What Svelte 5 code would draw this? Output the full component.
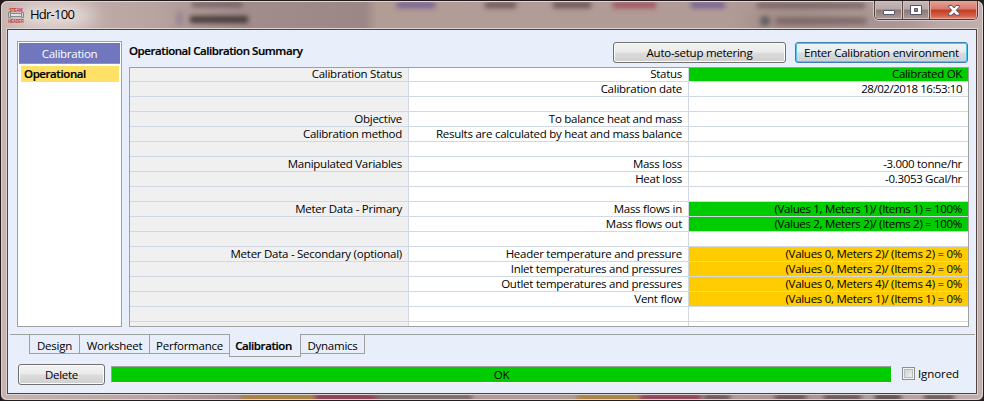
<script>
  const rows = [
    ['Calibration Status', 'Status', 'Calibrated OK', 'ok'],
    ['', 'Calibration date', '28/02/2018 16:53:10', 'date'],
    ['', '', '', ''],
    ['Objective', 'To balance heat and mass', '', ''],
    ['Calibration method', 'Results are calculated by heat and mass balance', '', ''],
    ['', '', '', ''],
    ['Manipulated Variables', 'Mass loss', '-3.000 tonne/hr', ''],
    ['', 'Heat loss', '-0.3053 Gcal/hr', ''],
    ['', '', '', ''],
    ['Meter Data - Primary', 'Mass flows in', '(Values 1, Meters 1)/ (Items 1) = 100%', 'ok'],
    ['', 'Mass flows out', '(Values 2, Meters 2)/ (Items 2) = 100%', 'ok'],
    ['', '', '', ''],
    ['Meter Data - Secondary (optional)', 'Header temperature and pressure', '(Values 0, Meters 2)/ (Items 2) = 0%', 'warn'],
    ['', 'Inlet temperatures and pressures', '(Values 0, Meters 2)/ (Items 2) = 0%', 'warn'],
    ['', 'Outlet temperatures and pressures', '(Values 0, Meters 4)/ (Items 4) = 0%', 'warn'],
    ['', 'Vent flow', '(Values 0, Meters 1)/ (Items 1) = 0%', 'warn'],
    ['', '', '', ''],
    ['', '', '', '']
  ];
  const tabs = [
    { name: 'Design', width: 51 },
    { name: 'Worksheet', width: 71 },
    { name: 'Performance', width: 81 },
    { name: 'Calibration', width: 72 },
    { name: 'Dynamics', width: 65 }
  ];
  let active = $state('Calibration');
  let ignored = $state(false);
</script>

<div class="desktop">
  <div class="window">
    <svg class="glass wide" width="984" height="401" viewBox="0 0 984 401" aria-hidden="true">
      <ellipse cx="55" cy="16" rx="42" ry="14" fill="#e8dfdd" opacity=".9" />
      <rect x="750" y="16" width="170" height="12" fill="#806c6b" opacity=".4" />
    </svg>
    <svg class="glass soft" width="984" height="401" viewBox="0 0 984 401" aria-hidden="true">
      <rect x="176" y="12" width="7" height="14" fill="#7a6a88" opacity=".4" />
      <rect x="192" y="2" width="50" height="5" fill="#4f403f" opacity=".6" />
      <rect x="190" y="16" width="58" height="7" fill="#352a2a" opacity=".85" />
      <rect x="397" y="2" width="38" height="6" fill="#685395" opacity=".8" />
      <rect x="485" y="2" width="31" height="6" fill="#574645" opacity=".8" />
      <rect x="553" y="2" width="38" height="6" fill="#554443" opacity=".8" />
      <rect x="613" y="2" width="43" height="6" fill="#9d4552" opacity=".85" />
      <rect x="691" y="2" width="34" height="6" fill="#685395" opacity=".8" />
      <rect x="757" y="3" width="108" height="5" fill="#5d4a49" opacity=".7" />
      <circle cx="765" cy="21" r="5" fill="#494b50" opacity=".75" />
      <rect x="776" y="18" width="90" height="6" fill="#5d4a49" opacity=".6" />
      <rect x="241" y="394" width="73" height="7" fill="#ad8134" />
      <rect x="315" y="394" width="61" height="7" fill="#8d364b" />
      <rect x="376" y="394" width="96" height="7" fill="#766364" />
      <rect x="577" y="394" width="62" height="7" fill="#ad8134" />
      <rect x="640" y="394" width="61" height="7" fill="#8d364b" />
      <rect x="704" y="394" width="26" height="7" fill="#655354" />
      <rect x="775" y="394" width="31" height="7" fill="#655354" />
      <rect x="824" y="394" width="37" height="7" fill="#655354" />
      <rect x="875" y="394" width="26" height="7" fill="#554748" />
      <rect x="924" y="394" width="30" height="7" fill="#655354" />
    </svg>
    <svg class="glass" width="984" height="401" viewBox="0 0 984 401" aria-hidden="true">
      <rect x="1.5" y="1.5" width="981" height="398" rx="6" fill="none" stroke="#e0d4d2" />
    </svg>
    <header>
      <svg class="logo" width="18" height="18" viewBox="-1 -1 18 18">
        <g fill="#cf3137" font-family="Liberation Sans, sans-serif" font-weight="bold" font-size="4.6">
          <text x="1.2" y="3.6" textLength="13.4" lengthAdjust="spacingAndGlyphs">STEAM</text>
          <text x=".3" y="14.6" textLength="15.2" lengthAdjust="spacingAndGlyphs">HEADER</text>
        </g>
        <path d="M2 5.5H14V8.5H2Z" fill="#dce0e0" stroke="#858c8f" />
        <path d="M.5 4.5H2.5V9.5H.5ZM13.5 4.5H15.5V9.5H13.5Z" fill="#d2d6d7" stroke="#80878a" />
      </svg>
      <h1>Hdr-100</h1>
      <div class="controls">
        <button class="min" aria-label="Minimize"><svg width="12" height="6"><rect x=".5" y=".5" width="11" height="4" rx=".5" fill="#fff" stroke="#53556b" /></svg></button>
        <button class="max" aria-label="Maximize"><svg width="12" height="10"><path d="M.5.5H11.5V9.5H.5ZM4.5 3.5V6.5H7.5V3.5Z" fill="#fff" fill-rule="evenodd" stroke="#53556b" /></svg></button>
        <button class="close" aria-label="Close"><svg width="12" height="11"><path d="M.7.5H4L6 3 8 .5H11.3V2L8.2 5.3 11.3 8.5V10.2H8L6 7.8 4 10.2H.7V8.5L3.8 5.3.7 2Z" fill="#fff" stroke="#53556b" stroke-linejoin="round" /></svg></button>
      </div>
    </header>

    <main>
      <div class="content">
        <aside>
          <div class="side-title">Calibration</div>
          <div class="side-item">Operational</div>
        </aside>
        <section>
          <div class="top">
            <h2>Operational Calibration Summary</h2>
            <button class="btn auto">Auto-setup metering</button>
            <button class="btn enter">Enter Calibration environment</button>
          </div>
          <div class="grid">
            {#each rows as [group, label, value, state]}
              <div class="row">
                <div class="cell group">{group}</div>
                <div class="cell label">{label}</div>
                <div class="cell value {state}">{value}</div>
              </div>
            {/each}
          </div>
        </section>
      </div>

      <nav>
        <span class="lead"></span>
        {#each tabs as tab}
          <button class="tab" class:active={active === tab.name} style="width: {tab.width}px" onclick={() => (active = tab.name)}>{tab.name}</button>
        {/each}
        <span class="rest"></span>
      </nav>

      <footer>
        <button class="btn delete">Delete</button>
        <div class="status">OK</div>
        <label><input type="checkbox" bind:checked={ignored} /><span>Ignored</span></label>
      </footer>
    </main>
  </div>
</div>

<style>
  :global(body) { background: #191516; }
  .desktop { width: 984px; height: 401px; overflow: hidden; background: #201a1b; }
  .desktop, .desktop * { box-sizing: border-box; }
  .desktop, button { font-family: "Open Sans", "Noto Sans", sans-serif; font-size: 11.5px; letter-spacing: -.26px; color: #000; }
  button { padding: 0; margin: 0; }
  .window {
    position: relative; width: 984px; height: 401px; border: 1px solid #241b1c;
    border-radius: 7px 7px 6px 6px; overflow: hidden; padding: 0 6px 6px;
    background: linear-gradient(90deg, #c7b4b1, #b8a4a1 150px, #a08d8c 240px, #9b8786 364px, #b29c96 376px, #b19b96 735px, #a79390 800px, #c1afad 100%);
  }
  .glass { position: absolute; left: -1px; top: -1px; }
  .soft { filter: blur(2.5px); }
  .wide { filter: blur(9px); }
  header { position: relative; height: 28px; display: flex; align-items: flex-start; }
  .logo { margin: 6px 0 0 0; flex: none; }
  h1 { font-size: 13px; font-weight: 400; margin: 5px 0 0 5px; line-height: 17px; letter-spacing: -.75px; flex: 1; text-shadow: 0 0 6px #eee5e3; }
  .controls {
    display: flex; width: 104px; height: 19px; margin-right: -1px;
    border: 1px solid #4b3c3d; border-top: 0; border-radius: 0 0 5px 5px; overflow: hidden;
    box-shadow: 0 0 0 1px #d8caca;
  }
  .controls button {
    display: flex; align-items: center; justify-content: center; border: 0; border-right: 1px solid #584a4b;
    background: linear-gradient(#c7bab9, #b7a8a7 45%, #8b7877 50%, #ab9b9a);
    box-shadow: inset 0 0 0 1px #cfc3c2;
  }
  .controls .min { width: 28px; padding-top: 5px; }
  .controls .max { width: 27px; padding-top: 0; }
  .controls .close {
    flex: 1; border-right: 0; background: linear-gradient(#e3a294, #d8796a 45%, #bf3c22 50%, #d5654c 85%, #e19c84);
    box-shadow: inset 0 0 0 1px #e6a697;
  }
  main {
    position: relative; height: 365px; border: 1px solid #4c4344; background: #e8effa;
    box-shadow: 0 0 0 1px #ded4d3; display: flex; flex-direction: column;
  }
  .content { display: flex; height: 304px; padding: 11px 7px 7px 9px; }
  aside { width: 105px; height: 286px; border: 1px solid #a0a0a0; background: #fff; padding: 1px; }
  .side-title { height: 21px; line-height: 22px; background: #7077bd; color: #fff; text-align: center; border-bottom: 1px solid #9296b4; }
  .side-item { margin: 2px 1px 0 2px; height: 16px; line-height: 15px; padding-left: 3px; background: #ffe168; font-weight: 600; letter-spacing: -.42px; -webkit-text-stroke: .2px #000; }
  section { width: 840px; margin-left: 7px; }
  .top { height: 26px; display: flex; align-items: flex-start; }
  h2 { font-size: 11.5px; font-weight: 600; margin: 2px 0 0; line-height: 16px; letter-spacing: -.44px; flex: 1; white-space: nowrap; -webkit-text-stroke: .2px #000; }
  .btn {
    height: 21px; border: 1px solid #707070; border-radius: 3px; line-height: 19px; text-align: center;
    background: linear-gradient(#f3f3f3, #ebebeb 48%, #dcdcdc 52%, #cfcfcf); box-shadow: inset 0 0 0 1px #fbfbfb;
  }
  .auto { width: 173px; margin: 1px 9px 0 0; }
  .enter { width: 173px; margin: 1px 1px 0 0; border-color: #3c7fb1; background: linear-gradient(#eff3f5, #e7edf0 48%, #d7dde1 52%, #c9d1d6); box-shadow: inset 0 0 0 1px #48c8f2; }
  .grid { height: 260px; border: 1px solid #a0a0a0; background: #fff; overflow: hidden; }
  .row { display: flex; height: 15px; border-bottom: 1px solid #d0d7e5; }
  .row:first-child { height: 14px; }
  .cell { line-height: 14px; height: 14px; text-align: right; white-space: pre; }
  .row:first-child .cell { height: 13px; line-height: 12px; }
  .group { width: 279px; background: #f0f0f0; border-right: 1px solid #d0d7e5; padding-right: 6px; }
  .label { width: 280px; border-right: 1px solid #d0d7e5; padding-right: 6px; }
  .value { width: 279px; padding-right: 6px; letter-spacing: -.32px; }
  .date { letter-spacing: -.46px; }
  .ok { background: #00cc00; }
  .warn { background: #ffcc00; letter-spacing: -.28px; }
  nav { display: flex; height: 23px; margin: 0 1px 0 2px; align-items: flex-start; }
  .lead { width: 19px; height: 1px; background: #a0a0a0; }
  .rest { flex: 1; height: 1px; background: #a0a0a0; }
  .tab { height: 20px; border: 1px solid #a0a0a0; background: transparent; margin-right: -1px; line-height: 22px; flex: none; }
  .tab.active { height: 23px; border-top-color: transparent; font-weight: 600; letter-spacing: -.42px; padding-right: 3px; -webkit-text-stroke: .2px #000; }
  footer { display: flex; margin: 7px 0 0 10px; align-items: flex-start; }
  .delete { width: 87px; }
  .status { width: 781px; height: 17px; margin: 2px 0 0 6px; background: #00cc00; border: 1px solid #a0a0a0; border-right-color: #fff; border-bottom-color: #fff; line-height: 15px; text-align: center; }
  label { display: flex; margin: 3px 0 0 10px; align-items: flex-start; }
  input { appearance: none; width: 13px; height: 13px; margin: 0; border: 1px solid #8e8f8f; background: linear-gradient(135deg, #c6cbd0, #f6f6f6); box-shadow: inset 0 0 0 1px #f4f4f4, inset 0 0 0 2px #b8bdc3; }
  label span { line-height: 13px; margin-left: 3px; letter-spacing: -.1px; }
</style>
